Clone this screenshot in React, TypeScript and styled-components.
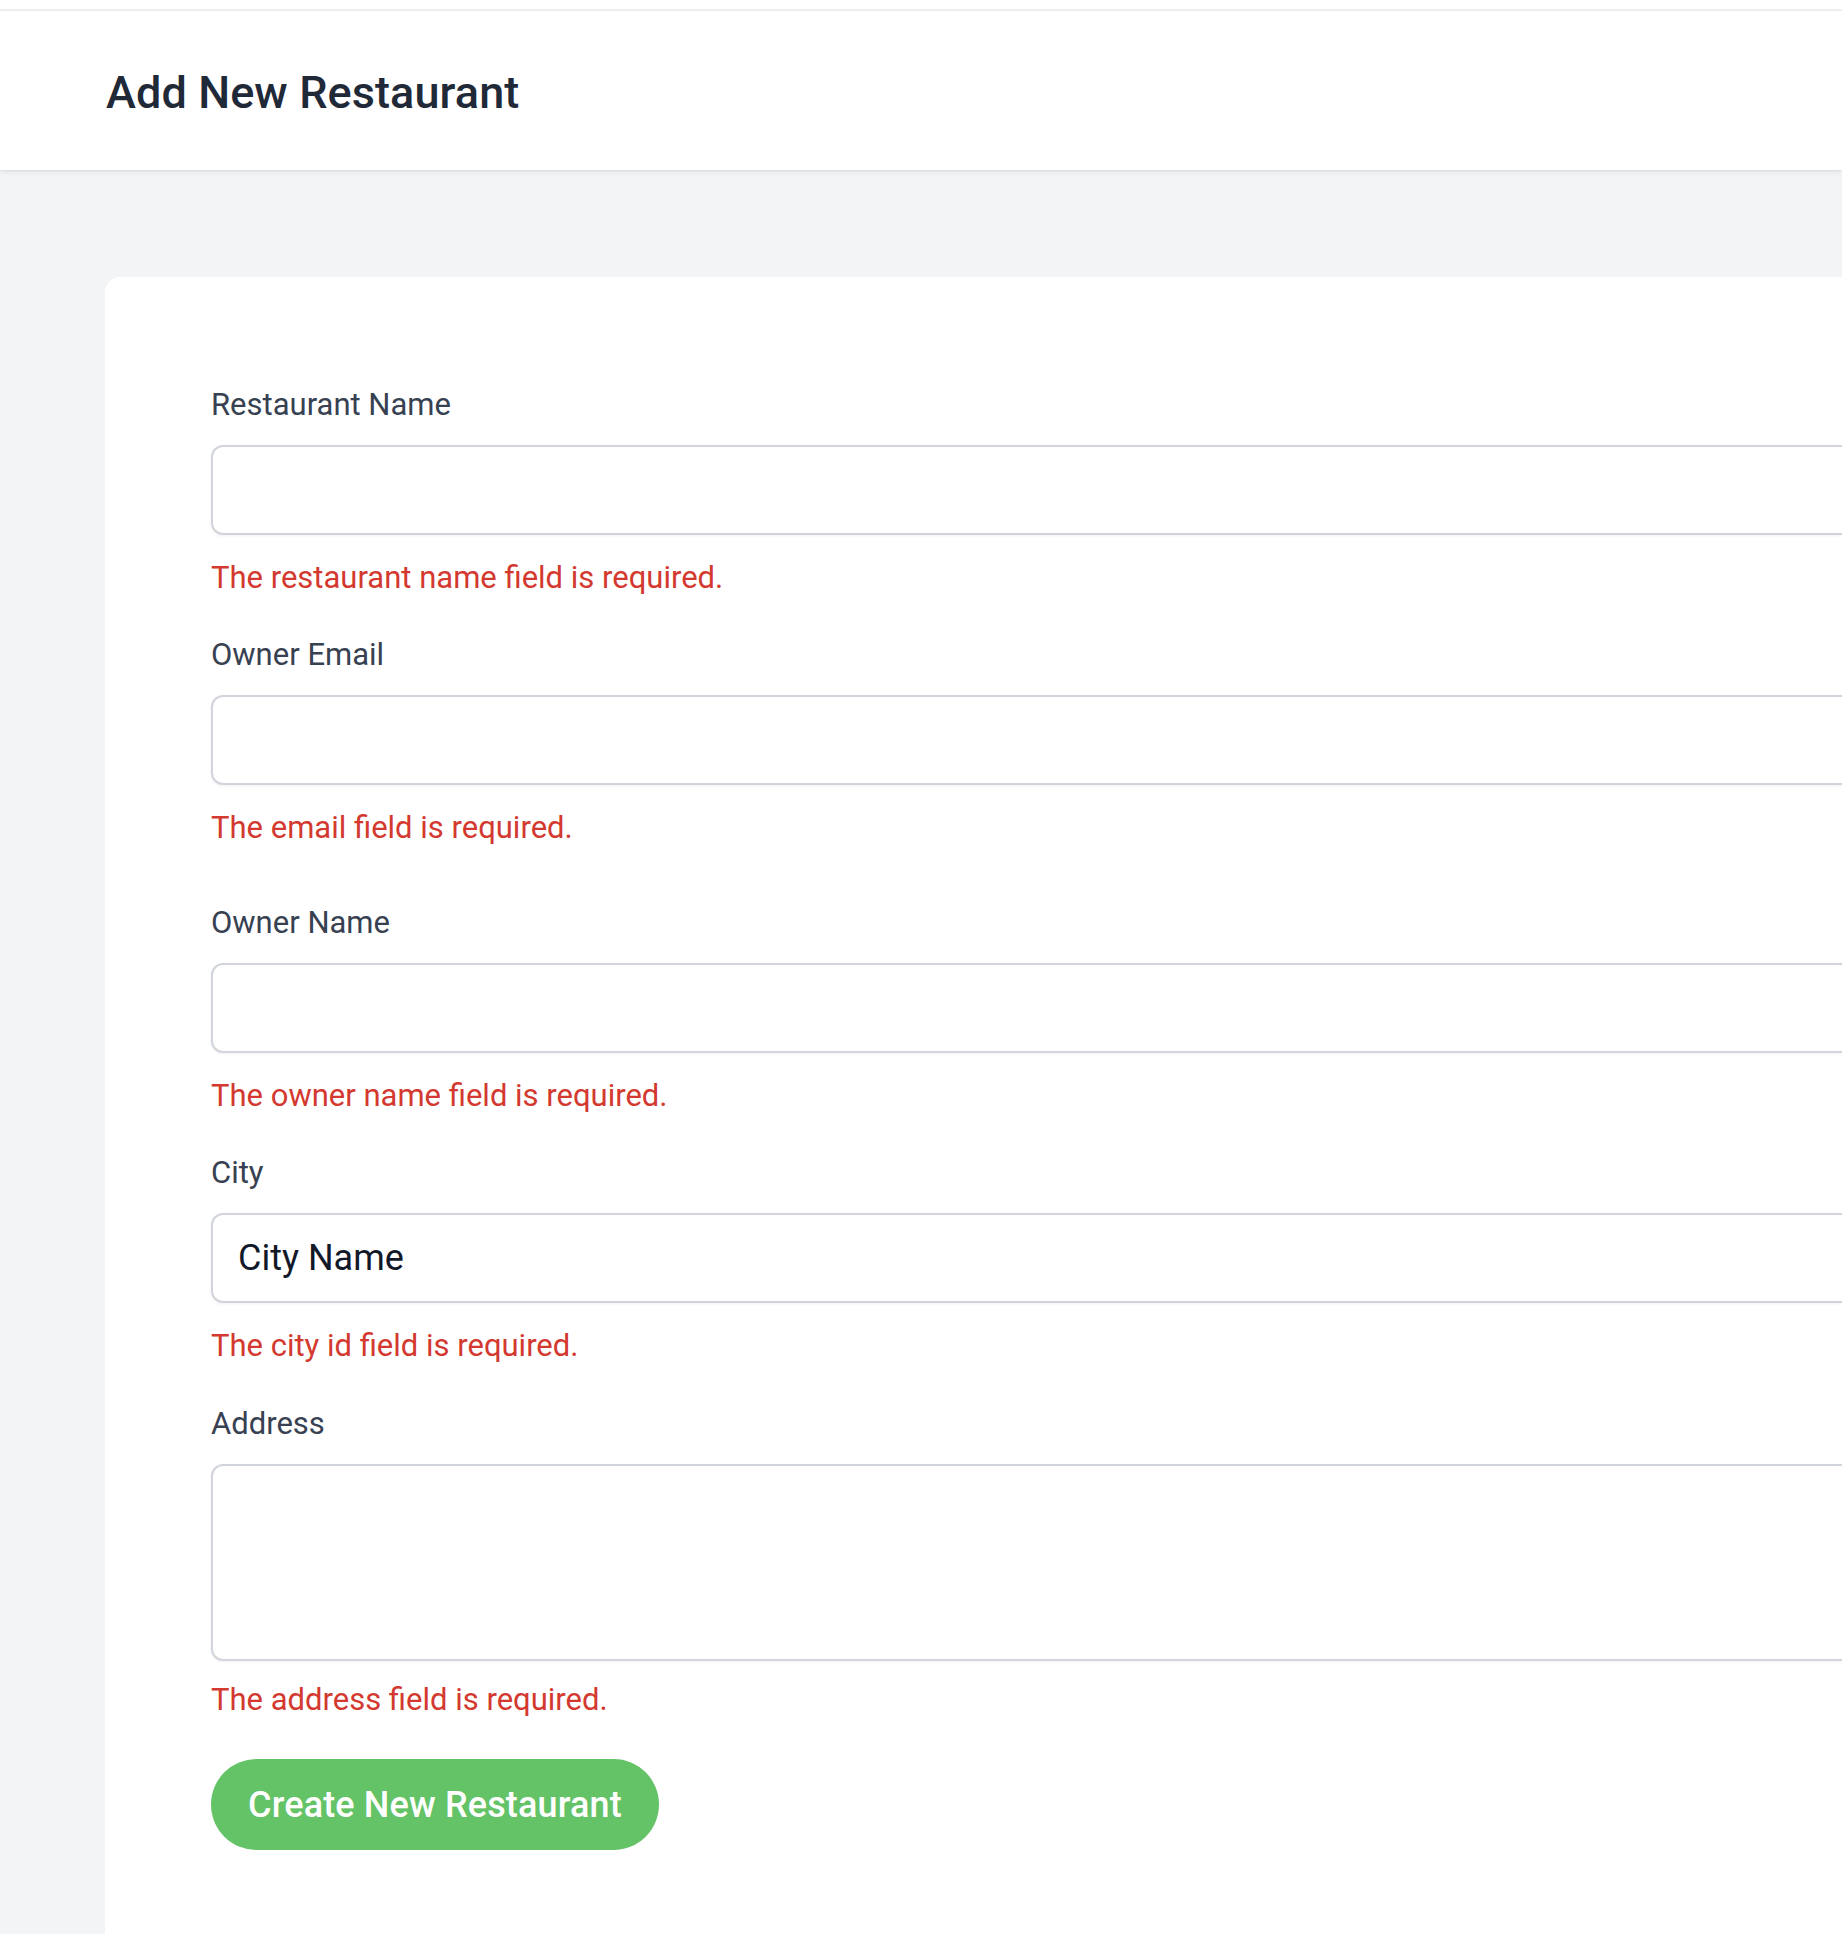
import React from "react";
import styled, { createGlobalStyle } from "styled-components";

const GlobalStyle = createGlobalStyle`
  html, body {
    margin: 0;
    padding: 0;
    background: #f3f4f6;
  }
  body {
    font-family: Roboto, "Liberation Sans", Arial, sans-serif;
    -webkit-font-smoothing: antialiased;
  }
  * { box-sizing: border-box; }
`;

const Page = styled.div`
  min-height: 1934px;
  background: #f3f4f6;
  overflow: hidden;
`;

const TopNav = styled.nav`
  height: 11px;
  background: #ffffff;
  border-bottom: 2px solid #eef0f2;
`;

const Header = styled.header`
  background: #ffffff;
  box-shadow: 0 2px 6px rgba(0, 0, 0, 0.07), 0 1px 2px rgba(0, 0, 0, 0.05);
  height: 159px;
  display: flex;
  align-items: center;
  padding: 4px 106px 0;
  position: relative;
`;

const Title = styled.h2`
  margin: 0;
  font-family: Roboto, "Liberation Sans", Arial, sans-serif;
  font-size: 45px;
  font-weight: 500;
  line-height: 60px;
  color: #1f2937;
  letter-spacing: 0.1px;
`;

const Main = styled.main`
  padding: 107px 0 0 105px;
`;

const Card = styled.section`
  background: #ffffff;
  border-radius: 15px 0 0 0;
  margin-right: -400px;
  padding: 108px 0 120px 106px;
`;

const Form = styled.form`
  display: flex;
  flex-direction: column;
`;

const Field = styled.div<{ $space: number }>`
  display: flex;
  flex-direction: column;
  margin-top: ${(p) => p.$space}px;
`;

const Label = styled.label`
  font-size: 31px;
  line-height: 40px;
  font-weight: 400;
  color: #374151;
  margin-bottom: 20px;
`;

const TextInput = styled.input`
  display: block;
  width: 100%;
  height: 90px;
  border: 2px solid #d1d5db;
  border-radius: 12px;
  background: #ffffff;
  box-shadow: 0 1px 3px rgba(0, 0, 0, 0.06);
  padding: 0 25px;
  font-family: Roboto, "Liberation Sans", Arial, sans-serif;
  font-size: 36px;
  color: #111827;
  outline: none;
`;

const TextArea = styled.textarea`
  display: block;
  width: 100%;
  height: 197px;
  border: 2px solid #d1d5db;
  border-radius: 12px;
  background: #ffffff;
  box-shadow: 0 1px 3px rgba(0, 0, 0, 0.06);
  padding: 20px 25px;
  font-family: Roboto, "Liberation Sans", Arial, sans-serif;
  font-size: 36px;
  resize: none;
  outline: none;
`;

const ErrorText = styled.p`
  margin: 23px 0 0;
  font-size: 31px;
  line-height: 40px;
  color: #d3392f;

  textarea + & {
    margin-top: 19px;
  }
`;

const SubmitButton = styled.button`
  align-self: flex-start;
  margin-top: 39px;
  height: 91px;
  padding: 0 37px;
  border: none;
  border-radius: 46px;
  background: #64c367;
  color: #ffffff;
  font-family: Roboto, "Liberation Sans", Arial, sans-serif;
  font-size: 36px;
  font-weight: 500;
  letter-spacing: 0.15px;
  cursor: pointer;
`;

type FieldDef = {
  id: string;
  label: string;
  error: string;
  space: number;
  kind: "input" | "textarea";
  value?: string;
};

const fields: FieldDef[] = [
  { id: "name", label: "Restaurant Name", error: "The restaurant name field is required.", space: 0, kind: "input" },
  { id: "email", label: "Owner Email", error: "The email field is required.", space: 37, kind: "input" },
  { id: "owner", label: "Owner Name", error: "The owner name field is required.", space: 55, kind: "input" },
  { id: "city", label: "City", error: "The city id field is required.", space: 37, kind: "input", value: "City Name" },
  { id: "address", label: "Address", error: "The address field is required.", space: 38, kind: "textarea" },
];

export default function App() {
  return (
    <Page>
      <GlobalStyle />
      <TopNav />
      <Header>
        <Title>Add New Restaurant</Title>
      </Header>
      <Main>
        <Card>
          <Form onSubmit={(e) => e.preventDefault()}>
            {fields.map((f) => (
              <Field key={f.id} $space={f.space}>
                <Label htmlFor={f.id}>{f.label}</Label>
                {f.kind === "input" ? (
                  <TextInput id={f.id} defaultValue={f.value ?? ""} />
                ) : (
                  <TextArea id={f.id} />
                )}
                <ErrorText>{f.error}</ErrorText>
              </Field>
            ))}
            <SubmitButton type="submit">Create New Restaurant</SubmitButton>
          </Form>
        </Card>
      </Main>
    </Page>
  );
}
